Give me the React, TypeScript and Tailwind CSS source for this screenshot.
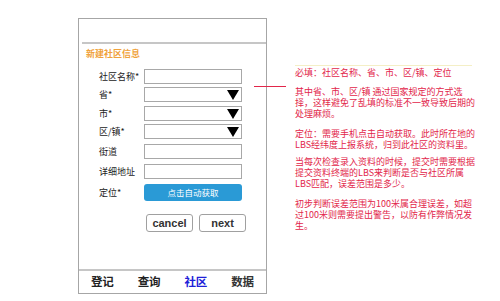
import React from "react";

const cjk = { fontFamily: '"Noto Sans CJK SC", "Noto Sans", sans-serif' };
const latin = { fontFamily: '"Liberation Sans", Arial, sans-serif' };

function Tri() {
  return (
    <svg width="12" height="10" viewBox="0 0 12 10" className="mr-[2px]">
      <polygon points="0,0 12,0 6,10" fill="#000" />
    </svg>
  );
}

function Row({ label, mt, select }: { label: string; mt: string; select?: boolean }) {
  return (
    <div className={`flex items-center ${mt}`}>
      <div className="w-[45px] pl-[20px] box-content shrink-0 text-[9px] leading-[15px] text-[#222] whitespace-nowrap">{label}</div>
      <div className="w-[98px] h-[15px] border border-[#a8a8a8] bg-white flex items-center justify-end">
        {select ? <Tri /> : null}
      </div>
    </div>
  );
}

export default function App() {
  const red = "text-[#e2264a]";
  return (
    <div className="w-[500px] h-[301px] bg-white relative flex items-start overflow-hidden" style={cjk}>
      <div className="ml-[78px] mt-[18px] w-[189px] h-[276px] border border-[#a6a6a6] flex flex-col">
        <div className="h-[23px]" />
        <div className="h-[2px] ml-[3px] bg-[#c6c6c6]" />
        <div className="mt-[4px] pl-[7px] text-[9px] leading-[12px] font-bold text-[#f0a23c]">新建社区信息</div>
        <div className="mt-[9px] flex flex-col">
          <Row label="社区名称*" mt="" />
          <Row label="省*" mt="mt-[3px]" select />
          <Row label="市*" mt="mt-[4px]" select />
          <Row label="区/镇*" mt="mt-[3px]" select />
          <Row label="街道" mt="mt-[5px]" />
          <Row label="详细地址" mt="mt-[5px]" />
          <div className="flex items-center mt-[5px]">
            <div className="w-[45px] pl-[20px] box-content shrink-0 text-[9px] leading-[17px] text-[#222]">定位*</div>
            <div className="w-[98px] h-[17px] rounded-[3px] bg-[#2a9ad6] text-white text-[8.5px] flex items-center justify-center">点击自动获取</div>
          </div>
          <div className="flex mt-[13px] ml-[67px] gap-[6px]" style={latin}>
            <div className="w-[47px] h-[18px] rounded-[3px] border border-[#a0a0a0] flex items-center justify-center text-[11px] font-bold text-[#333]">cancel</div>
            <div className="w-[47px] h-[18px] rounded-[3px] border border-[#a0a0a0] flex items-center justify-center text-[11px] font-bold text-[#333]">next</div>
          </div>
        </div>
        <div className="mt-auto h-[24px] border-t-2 border-[#c6c6c6] grid grid-cols-4 items-center text-[11.5px] font-bold">
          <div className="text-center text-[#222]">登记</div>
          <div className="text-center text-[#222]">查询</div>
          <div className="text-center text-[#2020d8]">社区</div>
          <div className="text-center text-[#333]">数据</div>
        </div>
      </div>

      <div className={`ml-[28px] mt-[65px] flex flex-col text-[9px] leading-[11px] whitespace-nowrap ${red}`}>
        <div className="h-px w-[177px] bg-[#f4efc6]" />
        <p className="mt-px">必填：社区名称、省、市、区/镇、定位</p>
        <p className="mt-[8px]">
          其中省、市、区/镇 通过国家规定的方式选<br />
          择，这样避免了乱填的标准不一致导致后期的<br />
          处理麻烦。
        </p>
        <p className="mt-[9px]">
          定位：需要手机点击自动获取。此时所在地的<br />
          LBS经纬度上报系统，归到此社区的资料里。
        </p>
        <p className="mt-[6px]">
          当每次检查录入资料的时候，提交时需要根据<br />
          提交资料终端的LBS来判断是否与社区所属<br />
          LBS匹配，误差范围是多少。
        </p>
        <p className="mt-[9px]">
          初步判断误差范围为100米属合理误差，如超<br />
          过100米则需要提出警告，以防有作弊情况发<br />
          生。
        </p>
      </div>

      <div className="absolute left-[254px] top-[86px] w-[32px] h-px bg-[#e2264a]" />
    </div>
  );
}
